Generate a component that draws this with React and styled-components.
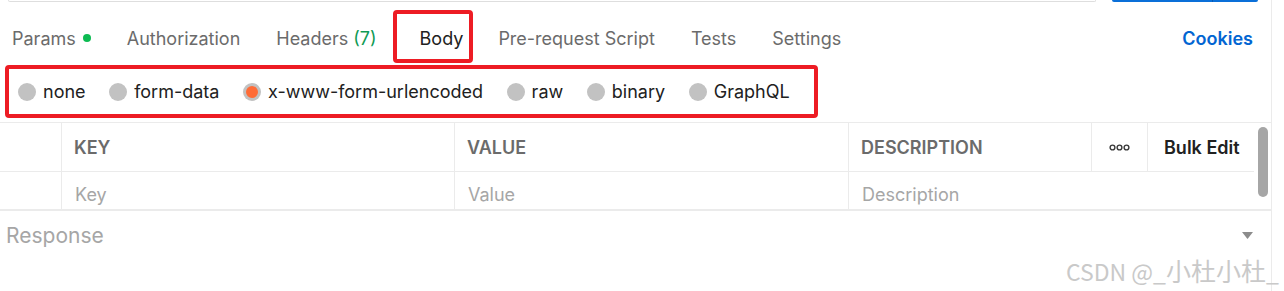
import React from "react";
import styled, { createGlobalStyle } from "styled-components";

const Global = createGlobalStyle`
  html, body { margin: 0; padding: 0; background: #ffffff; }
  body { font-family: Inter, "Noto Sans", "Liberation Sans", sans-serif; -webkit-font-smoothing: antialiased; }
  * { box-sizing: border-box; }
`;

const Page = styled.div`
  position: relative;
  width: 1284px;
  height: 291px;
  overflow: hidden;
  background: #fff;
`;

const Main = styled.div`
  width: 1272px;
  height: 291px;
  border-right: 1px solid #ebebeb;
  display: flex;
  flex-direction: column;
`;

const TopStrip = styled.div`
  display: flex;
  height: 2px;
  padding-left: 8px;
`;

const UrlInputEdge = styled.div`
  width: 1088px;
  height: 2px;
  border: 1px solid #dedede;
  border-top: 0;
  border-radius: 0 0 4px 4px;
`;

const SendEdge = styled.div`
  margin-left: 16px;
  width: 146px;
  height: 2px;
  background: #0a6fd8;
  border-radius: 0 0 4px 4px;
  display: flex;
  justify-content: flex-end;
  padding-right: 45px;
  & > span { width: 1px; height: 2px; background: #0659b3; }
`;

const TabBar = styled.div`
  display: flex;
  align-items: stretch;
  height: 62px;
  padding: 10px 18px 0 12px;
  gap: 36px;
`;

const Tab = styled.div`
  position: relative;
  display: flex;
  align-items: center;
  font-size: 18px;
  color: ${(p) => (p.$active ? "#212121" : "#6b6b6b")};
  white-space: nowrap;
  margin: ${(p) => (p.$boxed ? "0 -1px 0 7px" : "0")};
  &::after {
    content: "";
    display: ${(p) => (p.$boxed ? "block" : "none")};
    position: absolute;
    top: -2px;
    bottom: 1px;
    left: -27px;
    right: -10px;
    border: 4px solid #ed1c24;
    border-radius: 4px;
    pointer-events: none;
  }
`;

const Dot = styled.span`
  width: 8px;
  height: 8px;
  border-radius: 50%;
  background: #0cbb52;
  margin-left: 7px;
`;

const Count = styled.span`
  color: #0f9a55;
  margin-left: 5px;
`;

const Spacer = styled.div`
  flex: 1;
`;

const CookiesLink = styled.div`
  display: flex;
  align-items: center;
  font-size: 18px;
  font-weight: 600;
  color: #0265d2;
`;

const RadioBox = styled.div`
  margin: 1px 0 0 5px;
  width: 813px;
  height: 53px;
  border: 4px solid #ed1c24;
  border-radius: 4px;
  display: flex;
  align-items: center;
  padding-left: 9px;
  gap: 23.6px;
`;

const RadioItem = styled.label`
  display: flex;
  align-items: center;
  gap: 7px;
  font-size: 18px;
  color: #212121;
  white-space: nowrap;
`;

const RadioCircle = styled.span`
  width: 18px;
  height: 18px;
  border-radius: 50%;
  background: #c2c2c2;
  display: flex;
  align-items: center;
  justify-content: center;
  &::after {
    content: "";
    display: ${(p) => (p.$checked ? "block" : "none")};
    width: 12px;
    height: 12px;
    border-radius: 50%;
    background: #ff6c37;
  }
`;

const Table = styled.div`
  margin-top: 4px;
  display: grid;
  grid-template-columns: 61px 393px 394px 243px 56px 107px 17px;
  grid-template-rows: 49px 37px;
  border-top: 1px solid #ebebeb;
  border-bottom: 2px solid #ebebeb;
`;

const HeadCell = styled.div`
  display: flex;
  align-items: center;
  justify-content: ${(p) => (p.$center ? "center" : "flex-start")};
  padding-left: ${(p) => (p.$center ? "0" : p.$pad || "12px")};
  border-bottom: 1px solid #ebebeb;
  border-left: ${(p) => (p.$first ? "none" : "1px solid #ebebeb")};
  font-size: 18px;
  font-weight: 600;
  color: ${(p) => (p.$dark ? "#212121" : "#6b6b6b")};
  white-space: nowrap;
`;

const BodyCell = styled.div`
  display: flex;
  align-items: center;
  padding: 7px 0 0 13px;
  border-left: ${(p) => (p.$first ? "none" : "1px solid #ebebeb")};
  grid-column: ${(p) => p.$span || "auto"};
  font-size: 18px;
  color: #a6a6a6;
  white-space: nowrap;
`;

const ScrollTrack = styled.div`
  grid-column: 7;
  grid-row: 1 / span 2;
  padding: 4px 0 0 4px;
`;

const ScrollThumb = styled.div`
  width: 10px;
  height: 70px;
  border-radius: 5px;
  background: #a6a6a6;
`;

const ResponseBar = styled.div`
  height: 48px;
  display: flex;
  align-items: center;
  justify-content: space-between;
  padding: 0 18px 0 6px;
`;

const ResponseLabel = styled.div`
  font-size: 21px;
  color: #a6a6a6;
`;

const Watermark = styled.div`
  position: absolute;
  left: 1066px;
  top: 252px;
  font-family: "Noto Sans CJK SC", "Liberation Sans", sans-serif;
  font-size: 23px;
  color: #c9c9c9;
  white-space: nowrap;
  pointer-events: none;
`;

const WatermarkCjk = styled.span`
  font-size: 25px;
`;

const MoreIcon = () => (
  <svg width="21" height="7" viewBox="0 0 21 7" fill="none">
    <circle cx="3.5" cy="3.5" r="2.4" stroke="#3a3a3a" strokeWidth="1.4" />
    <circle cx="10.5" cy="3.5" r="2.4" stroke="#3a3a3a" strokeWidth="1.4" />
    <circle cx="17.5" cy="3.5" r="2.4" stroke="#3a3a3a" strokeWidth="1.4" />
  </svg>
);

const Caret = () => (
  <svg width="11" height="7" viewBox="0 0 11 7">
    <path d="M0 0 L11 0 L5.5 7 Z" fill="#8c8c8c" />
  </svg>
);

const radios = [
  { label: "none" },
  { label: "form-data" },
  { label: "x-www-form-urlencoded", checked: true },
  { label: "raw" },
  { label: "binary" },
  { label: "GraphQL" },
];

export default function App() {
  return (
    <Page>
      <Global />
      <Main>
        <TopStrip>
          <UrlInputEdge />
          <SendEdge>
            <span />
          </SendEdge>
        </TopStrip>
        <TabBar>
          <Tab>
            Params
            <Dot />
          </Tab>
          <Tab>Authorization</Tab>
          <Tab>
            Headers<Count>(7)</Count>
          </Tab>
          <Tab $active $boxed>
            Body
          </Tab>
          <Tab>Pre-request Script</Tab>
          <Tab>Tests</Tab>
          <Tab>Settings</Tab>
          <Spacer />
          <CookiesLink>Cookies</CookiesLink>
        </TabBar>
        <RadioBox>
          {radios.map((r) => (
            <RadioItem key={r.label}>
              <RadioCircle $checked={r.checked} />
              {r.label}
            </RadioItem>
          ))}
        </RadioBox>
        <Table>
          <HeadCell $first />
          <HeadCell>KEY</HeadCell>
          <HeadCell>VALUE</HeadCell>
          <HeadCell>DESCRIPTION</HeadCell>
          <HeadCell $center>
            <MoreIcon />
          </HeadCell>
          <HeadCell $dark $pad="16px">
            Bulk Edit
          </HeadCell>
          <ScrollTrack>
            <ScrollThumb />
          </ScrollTrack>
          <BodyCell $first />
          <BodyCell>Key</BodyCell>
          <BodyCell>Value</BodyCell>
          <BodyCell $span="4 / span 3">Description</BodyCell>
        </Table>
        <ResponseBar>
          <ResponseLabel>Response</ResponseLabel>
          <Caret />
        </ResponseBar>
      </Main>
      <Watermark>
        CSDN @_<WatermarkCjk>小杜小杜</WatermarkCjk>_
      </Watermark>
    </Page>
  );
}
